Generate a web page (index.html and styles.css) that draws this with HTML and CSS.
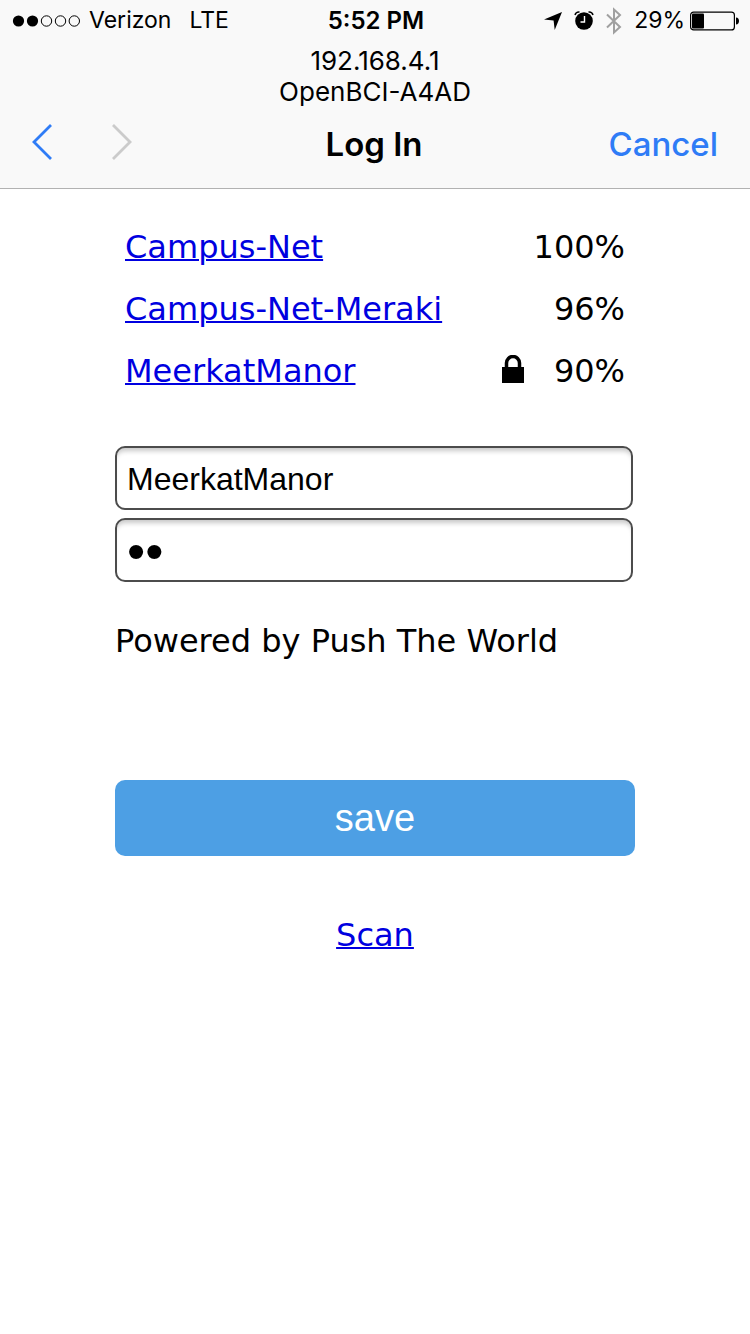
FILE: index.html
```html
<!DOCTYPE html>
<html lang="en">
<head>
<meta charset="utf-8">
<meta name="viewport" content="width=device-width">
<title>Log In</title>
<link rel="stylesheet" href="styles.css">
</head>
<body>
<header class="chrome">
  <div class="status">
    <div class="status-left">
      <svg class="signal" width="68" height="12" viewBox="0 0 68 12" aria-label="Signal: 2 of 5">
        <circle cx="6.500" cy="6" r="5.600"/><circle cx="20.500" cy="6" r="5.600"/>
        <g fill="none" stroke="#000"><circle cx="34.500" cy="6" r="5.200"/><circle cx="48.500" cy="6" r="5.200"/><circle cx="62.300" cy="6" r="5.200"/></g>
      </svg>
      <span class="carrier">Verizon</span>
      <span class="network">LTE</span>
    </div>
    <time class="clock">5:52 PM</time>
    <div class="status-right">
      <svg width="18" height="18" viewBox="0 0 18 18" aria-hidden="true"><path d="M18 0 10.700 18 9.600 8.600 0 7.600Z"/></svg>
      <svg class="alarm" width="20" height="20" viewBox="0 0 20 20" aria-hidden="true">
        <circle cx="10" cy="10" r="8.800"/>
        <path d="M1 4C1.500 2.100 3.300.8 5.500 1M19 4C18.500 2.100 16.700.8 14.500 1" fill="none" stroke="#000" stroke-width="1.500"/>
        <path d="M10.500 5v6H6.500" fill="none" stroke="#fff" stroke-width="1.400"/>
      </svg>
      <svg class="bluetooth" width="16" height="28" viewBox="0 0 16 28" aria-hidden="true"><path d="M1 7.500 14 20 8 25.500V2.500L14 8 1 20.500" fill="none" stroke="#a0a0a0" stroke-width="2"/></svg>
      <span class="percent">29%</span>
      <svg width="50" height="20" viewBox="0 0 50 20" aria-label="Battery">
        <rect x=".6" y="1.100" width="43.800" height="17.800" rx="3" fill="none" stroke="#000" stroke-width="1.200"/>
        <rect x="2" y="2.500" width="12" height="15" rx="1"/>
        <path d="M46 6.500C50 6.500 50 13.500 46 13.500Z"/>
      </svg>
    </div>
  </div>
  <p class="host">192.168.4.1<br>OpenBCI-A4AD</p>
  <nav class="bar">
    <div class="history">
      <button type="button" aria-label="Back"><svg width="24" height="38" viewBox="0 0 24 38"><path d="M21 2 4 19 21 36" fill="none" stroke="#2f7cf6" stroke-width="2.800"/></svg></button>
      <button type="button" aria-label="Forward" disabled><svg width="24" height="38" viewBox="0 0 24 38"><path d="M3 2 20 19 3 36" fill="none" stroke="#cbcbcb" stroke-width="2.800"/></svg></button>
    </div>
    <h1>Log In</h1>
    <button type="button" class="cancel">Cancel</button>
  </nav>
</header>
<main class="portal">
  <ul class="networks">
    <li><a href="#ssid">Campus-Net</a><span>100%</span></li>
    <li><a href="#ssid">Campus-Net-Meraki</a><span>96%</span></li>
    <li><a href="#ssid">MeerkatManor</a>
      <svg class="lock" width="22" height="28" viewBox="0 0 22 28" aria-label="Secured"><path d="M0 12H22V28H0Z"/><path d="M4.500 13V8a6.500 6.500 0 0 1 13 0v5" fill="none" stroke="#000" stroke-width="3.500"/></svg>
      <span>90%</span></li>
  </ul>
  <form>
    <input id="ssid" type="text" aria-label="SSID" value="MeerkatManor">
    <input id="password" class="password" type="password" aria-label="Password" value="ab">
    <p class="credit">Powered by Push The World</p>
    <button class="save" type="button">save</button>
  </form>
  <a class="scan" href="#scan">Scan</a>
</main>
</body>
</html>
```
FILE: styles.css
```css
* { box-sizing: border-box; }
body {
  margin: 0;
  background: #fff;
  color: #000;
  font-family: Verdana, "DejaVu Sans", sans-serif;
  font-size: 32px;
}
button { border: 0; padding: 0; background: none; }
svg { display: block; flex: none; }
.chrome {
  background: #f9f9f9;
  border-bottom: 1px solid #b2b2b2;
  font-family: Inter, sans-serif;
}
.status {
  display: grid;
  grid-template-columns: 1fr auto 1fr;
  align-items: center;
  height: 41px;
  padding: 0 10px 0 12px;
  font-size: 23px;
  line-height: 41px;
}
.status-left, .status-right { display: flex; align-items: center; }
.status-right { justify-content: flex-end; }
.carrier { margin-left: 9px; }
.network { margin-left: 18px; }
.clock { font-size: 24px; font-weight: 600; }
.alarm { margin-left: 12px; }
.bluetooth { margin-left: 12px; }
.percent { margin: 0 5px 0 12px; }
.host {
  margin: 0;
  padding-top: 4px;
  text-align: center;
  font-size: 26px;
  line-height: 31px;
}
.bar {
  display: grid;
  grid-template-columns: 1fr auto 1fr;
  align-items: center;
  height: 81px;
  padding: 0 32px 8px 30px;
}
.history { display: flex; gap: 56px; padding-bottom: 4px; }
.bar h1 { margin: 0; font-size: 33px; font-weight: 600; }
.cancel {
  justify-self: end;
  color: #2f7cf6;
  font-family: inherit;
  font-size: 33px;
  font-weight: 500;
}
.portal {
  display: flex;
  flex-direction: column;
  align-items: center;
  padding: 27px 16px;
}
.networks, form { width: 100%; max-width: 520px; }
.networks { margin: 0; padding: 0 10px; list-style: none; }
.networks li {
  display: flex;
  align-items: center;
  height: 62px;
}
.networks a { margin-right: auto; }
.lock { margin: 0 30px 4px 0; }
a { color: #0000e0; text-decoration-thickness: 2px; }
form { display: flex; flex-direction: column; margin-top: 44px; }
input {
  width: calc(100% - 2px);
  height: 64px;
  margin-bottom: 8px;
  padding: 4px 10px 2px;
  border: 2px solid #4c4c4c;
  border-radius: 10px;
  background: #fff;
  box-shadow: inset 0 6px 5px -3px #c8c8c8;
  color: #000;
  font-family: "Liberation Sans", Arial, sans-serif;
  font-size: 32px;
}
.password { padding: 2px 10px 0; font-size: 52px; }
.credit { margin: 31px 0 0; line-height: 40px; }
.save {
  height: 76px;
  margin-top: 119px;
  border-radius: 10px;
  background: #4d9fe4;
  color: #fff;
  font-family: "Liberation Sans", Arial, sans-serif;
  font-size: 38px;
}
.scan { margin-top: 60px; line-height: 38px; }
```
